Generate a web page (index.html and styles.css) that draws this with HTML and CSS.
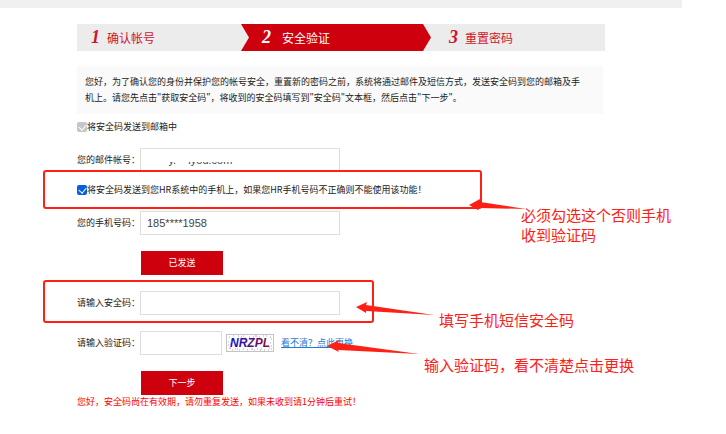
FILE: index.html
```
<!DOCTYPE html>
<html lang="zh-CN">
<head>
    <meta charset="utf-8">
    <title>重置密码</title>
    <link rel="stylesheet" href="styles.css">
</head>
<body>
    <div class="topbar"></div>
    <main class="content">
        <ol class="steps">
            <li class="step"><i class="num">1</i>确认帐号</li>
            <li class="step step-active"><i class="num">2</i>安全验证</li>
            <li class="step step-next"><i class="num">3</i>重置密码</li>
        </ol>

        <p class="notice">您好，为了确认您的身份并保护您的帐号安全，重置新的密码之前，系统将通过邮件及短信方式，发送安全码到您的邮箱及手机上。请您先点击"获取安全码"，将收到的安全码填写到"安全码"文本框，然后点击"下一步"。</p>

        <form class="form">
            <div class="check">
                <input type="checkbox" id="byMail" checked disabled>
                <label for="byMail">将安全码发送到邮箱中</label>
            </div>
            <div class="field field-mail">
                <label for="mail">您的邮件帐号：</label>
                <div class="masked">
                    <input type="text" id="mail" class="text" value="       y.    lyou.com">
                </div>
            </div>
            <div class="check">
                <input type="checkbox" id="byPhone" checked>
                <label for="byPhone">将安全码发送到您HR系统中的手机上，如果您HR手机号码不正确则不能使用该功能！</label>
            </div>
            <div class="field">
                <label for="phone">您的手机号码：</label>
                <input type="text" id="phone" class="text" value="185****1958">
            </div>
            <div class="actions">
                <button type="button" class="btn">已发送</button>
            </div>
            <div class="field">
                <label for="code">请输入安全码：</label>
                <input type="text" id="code" class="text">
            </div>
            <div class="field">
                <label for="captcha">请输入验证码：</label>
                <input type="text" id="captcha" class="text text-short">
                <svg class="captcha" width="48" height="18" viewBox="0 0 48 18">
                    <defs>
                        <linearGradient id="ink" x1="0" x2="1" y1="0" y2="0">
                            <stop offset="0" stop-color="#1010d0"/>
                            <stop offset="1" stop-color="#8a1038"/>
                        </linearGradient>
                    </defs>
                    <rect x="0.5" y="0.5" width="47" height="17" fill="#fff" stroke="#c4c4c4"/>
                    <g fill="none" stroke-width="1">
                        <path stroke="#8fc08f" d="M3 3h1M9 15h1M17 2h1M25 15h2M33 3h1M43 14h1M2 11h1M45 5h1M13 16h1M38 16h1"/>
                        <path stroke="#b79ad0" d="M5 6h1M12 2h1M21 16h1M29 2h2M40 2h1M44 9h1M3 14h2M35 15h1M17 15h1"/>
                        <path stroke="#d8a08c" d="M2 8h1M7 2h1M6 16h1M23 3h1M31 15h1M37 2h1M45 12h1M45 15h1M19 4h1"/>
                        <path stroke="#8aa8d8" d="M4 10h1M15 3h1M11 15h1M27 3h1M34 16h1M42 16h1M44 3h1M28 16h1"/>
                    </g>
                    <text x="4" y="13" fill="url(#ink)">NRZPL</text>
                </svg>
                <a href="#" class="refresh">看不清？点此更换</a>
            </div>
            <div class="actions actions-last">
                <button type="button" class="btn">下一步</button>
            </div>
            <p class="error">您好，安全码尚在有效期，请勿重复发送，如果未收到请1分钟后重试！</p>
        </form>
    </main>

    <!-- 标注 -->
    <div class="mark mark-phone"></div>
    <div class="mark mark-code"></div>
    <svg class="arrows" width="726" height="434" viewBox="0 0 726 434">
        <path d="M469 205L480 199L480 202L526 209L480 208L478 210Z"/>
        <path d="M356 307L367 302L366 305L434 315L366 311L366 313Z"/>
        <path d="M327 346L339 340L338 343L419 354L338 350L339 352Z"/>
    </svg>
    <p class="note note-phone">必须勾选这个否则手机<br>收到验证码</p>
    <p class="note note-code">填写手机短信安全码</p>
    <p class="note note-captcha">输入验证码，看不清楚点击更换</p>
</body>
</html>
```
FILE: styles.css
```
* {
    box-sizing: border-box;
}

body {
    margin: 0;
    position: relative;
    background: #fff;
    color: #222;
    font: 9px/14px "Noto Sans CJK SC", sans-serif;
}

p, ol {
    margin: 0;
    padding: 0;
}

.topbar {
    height: 8px;
    margin-right: 44px;
    background: #f0f0f0;
}

.content {
    padding: 16px 121px 0 77px;
}

.steps {
    display: grid;
    grid-template-columns: 164fr 190fr 174fr;
    height: 27px;
    background: #ececec;
    list-style: none;
}

.step {
    display: flex;
    align-items: center;
    padding-left: 14px;
    color: #d0142a;
    font-size: 12px;
}

.step-active {
    padding-left: 21px;
    background: #cf000e;
    color: #fff;
    clip-path: polygon(0 0, calc(100% - 8px) 0, 100% 50%, calc(100% - 8px) 100%, 0 100%, 8px 50%);
}

.step-next {
    padding-left: 18px;
}

.num {
    width: 16px;
    font: italic bold 18px "Liberation Serif", serif;
}

.step-active .num {
    width: 20px;
}

.notice {
    margin: 15px 2px 6px 0;
    padding: 8px 16px 8px 8px;
    background: #fafafa;
    line-height: 16px;
}

.check {
    display: flex;
    align-items: center;
    margin-bottom: 14px;
}

.check input {
    appearance: none;
    position: relative;
    width: 10px;
    height: 10px;
    margin: 0;
    border-radius: 2px;
    background: #0560df;
}

.check input:disabled {
    background: #c6c6ca;
}

.check input::after {
    content: "";
    position: absolute;
    left: 3px;
    top: 1px;
    width: 4px;
    height: 6px;
    border: solid #fff;
    border-width: 0 1px 1px 0;
    transform: rotate(40deg);
}

.field {
    display: flex;
    align-items: center;
    margin-bottom: 16px;
}

.field-mail {
    margin-bottom: 11px;
}

.field label {
    width: 63px;
}

.text {
    display: block;
    width: 200px;
    height: 24px;
    padding: 0 6px;
    border: 1px solid #ddd;
    background: #fff;
    color: #444;
    font: 11px "Liberation Sans", sans-serif;
}

.text-short {
    width: 82px;
}

.masked {
    position: relative;
}

.masked::after {
    content: "";
    position: absolute;
    left: 4px;
    top: 3px;
    width: 120px;
    height: 11px;
    background: #fff;
}

.captcha {
    margin: 0 7px 0 4px;
}

.captcha text {
    font: italic bold 12px "Liberation Sans", sans-serif;
}

.refresh {
    color: #2878d0;
}

.actions {
    margin: 0 0 16px 64px;
}

.actions-last {
    margin-bottom: 0;
}

.btn {
    display: block;
    width: 82px;
    height: 24px;
    padding: 0;
    border: 0;
    background: #cf000e;
    color: #fff;
    font: inherit;
}

.error {
    color: #f00;
}

.mark {
    position: absolute;
    left: 43px;
    border: 2px solid #ff2015;
    border-radius: 3px;
}

.mark-phone {
    top: 170px;
    width: 439px;
    height: 39px;
}

.mark-code {
    top: 280px;
    width: 331px;
    height: 43px;
}

.arrows {
    position: absolute;
    left: 0;
    top: 0;
    fill: #ff2015;
    pointer-events: none;
}

.note {
    position: absolute;
    color: #ff2015;
    font-size: 15px;
    line-height: 20px;
    white-space: nowrap;
}

.note-phone {
    left: 521px;
    top: 205px;
}

.note-code {
    left: 439px;
    top: 310px;
}

.note-captcha {
    left: 424px;
    top: 355px;
}
```
